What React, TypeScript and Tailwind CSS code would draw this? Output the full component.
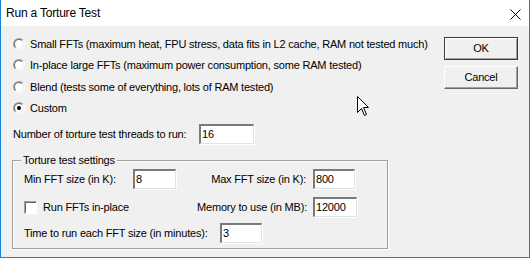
import React from 'react';

const font = "font-['Liberation_Sans',Arial,sans-serif]";

// Campo de texto hundido estilo Win classic
const Field: React.FC<{ value: string; w: string }> = ({ value, w }) => (
  <div
    className={`${w} h-[20px] shrink-0 bg-white border-t-2 border-l-2 border-t-[#7a7a7a] border-l-[#7a7a7a] border-b border-r border-b-[#e3e3e3] border-r-[#e3e3e3] shadow-[1px_1px_0_#ffffff] pl-[1px] flex items-center text-[11px] text-black leading-none`}
  >
    {value}
  </div>
);

const Radio: React.FC<{ checked?: boolean; label: string }> = ({ checked, label }) => (
  <div className="h-[21.5px] flex items-center gap-[5px] whitespace-nowrap">
    <div className="w-[12px] h-[12px] shrink-0 rounded-full border border-t-[#a0a0a0] border-l-[#a0a0a0] border-b-[#ffffff] border-r-[#ffffff] bg-[#e3e3e3] flex items-center justify-center">
      <div className="w-[10px] h-[10px] rounded-full border border-t-[#696969] border-l-[#696969] border-b-[#f0f0f0] border-r-[#f0f0f0] bg-white flex items-center justify-center">
        {checked && <div className="w-[4px] h-[4px] rounded-full bg-black" />}
      </div>
    </div>
    <span>{label}</span>
  </div>
);

const Button: React.FC<{ label: string; isDefault?: boolean }> = ({ label, isDefault }) => (
  <div
    className={`w-[74px] h-[23px] flex items-center justify-center bg-[#f0f0f0] ${
      isDefault
        ? 'border border-[#3c3c3c] shadow-[inset_1px_1px_0_#ffffff,inset_-1px_-1px_0_#a0a0a0]'
        : 'border border-t-[#ffffff] border-l-[#ffffff] border-b-[#696969] border-r-[#696969] shadow-[inset_-1px_-1px_0_#a0a0a0]'
    }`}
  >
    {label}
  </div>
);

export default function App() {
  return (
    <div className={`w-[530px] h-[258px] bg-[#f0f0f0] border-l border-r border-b border-[#1883d7] flex flex-col relative text-[11px] tracking-[-0.2px] text-black whitespace-nowrap ${font}`}>
      {/* Barra de título */}
      <div className="h-[26px] shrink-0 bg-white flex items-center justify-between pl-[5px] pr-[8px]">
        <span className="text-[12px] tracking-[-0.2px]">Run a Torture Test</span>
        <svg width="11" height="11" viewBox="0 0 11 11" className="mt-[2px]">
          <path d="M0.5 0.5 L10.5 10.5 M10.5 0.5 L0.5 10.5" stroke="#000" strokeWidth="1" />
        </svg>
      </div>

      {/* Cuerpo */}
      <div className="flex flex-col pl-[11px] pt-[7px]">
        <div className="flex">
          <div className="flex-1 flex flex-col pl-[1px]">
            <Radio label="Small FFTs (maximum heat, FPU stress, data fits in L2 cache, RAM not tested much)" />
            <Radio label="In-place large FFTs (maximum power consumption, some RAM tested)" />
            <Radio label="Blend (tests some of everything, lots of RAM tested)" />
            <Radio checked label="Custom" />
          </div>
          <div className="w-[85px] shrink-0 flex flex-col gap-[6px] pt-[4px]">
            <Button label="OK" isDefault />
            <Button label="Cancel" />
          </div>
        </div>

        {/* Hilos */}
        <div className="flex items-center mt-[5px] pl-[1px]">
          <span className="w-[186px]">Number of torture test threads to run:</span>
          <Field value="16" w="w-[55px]" />
        </div>

        {/* Grupo de ajustes */}
        <div className="relative w-[376px] h-[89px] mt-[16px] border border-[#a0a0a0] shadow-[inset_1px_1px_0_#ffffff,1px_1px_0_#ffffff] flex flex-col pl-[11px]">
          <span className="absolute left-[8px] top-[-8px] px-[2px] bg-[#f0f0f0] leading-[14px]">Torture test settings</span>
          <div className="flex items-center mt-[8px]">
            <span className="w-[109px]">Min FFT size (in K):</span>
            <Field value="8" w="w-[43px]" />
            <span className="flex-1 text-right pr-[7px]">Max FFT size (in K):</span>
            <Field value="800" w="w-[42px]" />
            <div className="w-[32px] shrink-0" />
          </div>
          <div className="flex items-center mt-[8px]">
            <div className="w-[13px] h-[13px] shrink-0 bg-white border border-t-[#a0a0a0] border-l-[#a0a0a0] border-b-[#ffffff] border-r-[#ffffff] shadow-[inset_1px_1px_0_#696969]" />
            <span className="ml-[6px]">Run FFTs in-place</span>
            <span className="flex-1 text-right pr-[6px]">Memory to use (in MB):</span>
            <Field value="12000" w="w-[44px]" />
            <div className="w-[30px] shrink-0" />
          </div>
          <div className="flex items-center mt-[6px]">
            <span className="w-[196px]">Time to run each FFT size (in minutes):</span>
            <Field value="3" w="w-[42px]" />
          </div>
        </div>
      </div>

      {/* Puntero del ratón */}
      <svg className="absolute left-[356px] top-[96px]" width="13" height="21" viewBox="0 0 13 21">
        <path
          d="M0.5 0.5 L0.5 16.5 L4.5 12.5 L7.5 19.5 L9.5 18.5 L6.5 11.5 L11.5 11.5 Z"
          fill="#ffffff"
          stroke="#000000"
          strokeWidth="1"
          strokeLinejoin="miter"
        />
      </svg>
    </div>
  );
}
